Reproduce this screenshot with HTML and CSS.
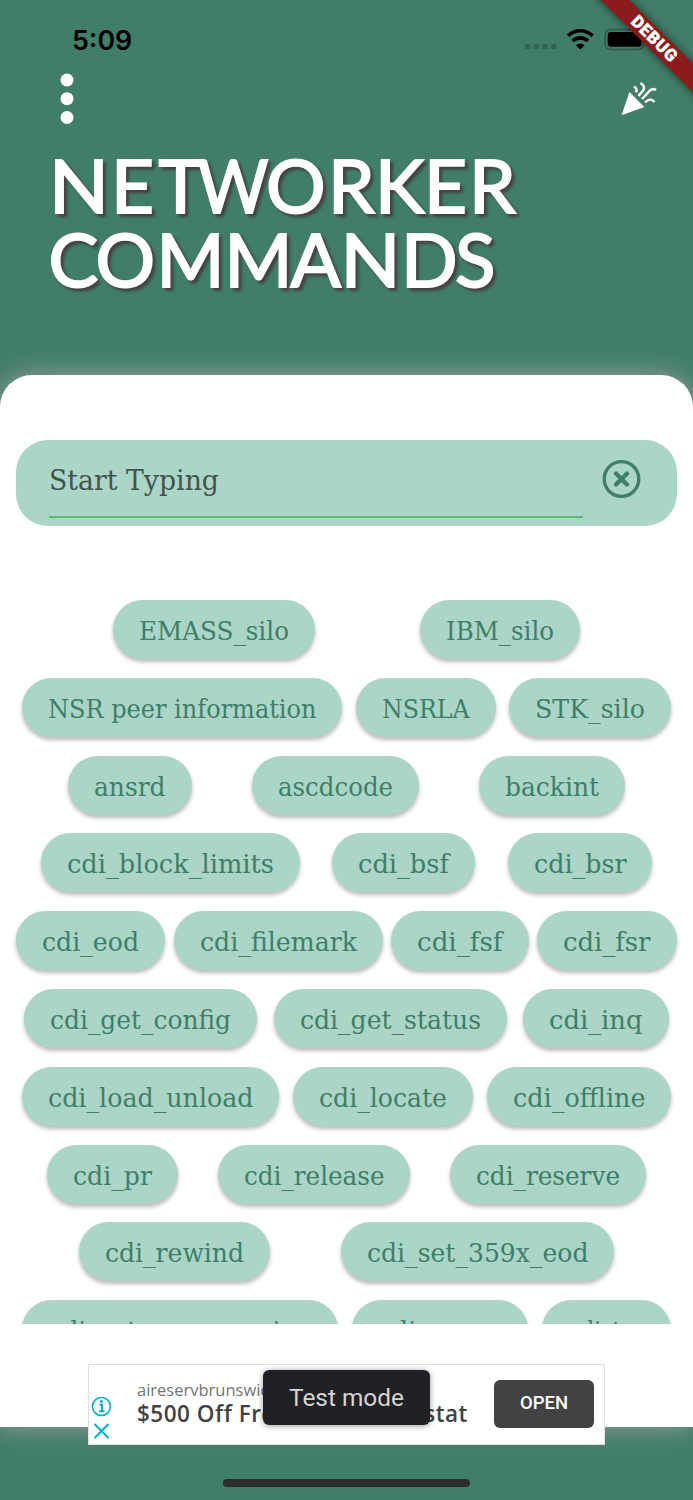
FILE: index.html
```html
<!DOCTYPE html>
<html lang="en">
<head>
  <meta charset="utf-8">
  <title>Networker Commands</title>
  <link rel="stylesheet" href="styles.css">
</head>
<body>
<div class="screen">

  <div class="status">
    <span class="time">5:09</span>
    <svg class="status-icons" width="130" height="30" viewBox="520 24 130 30">
      <g fill="#316352">
        <rect x="525" y="44" width="5.5" height="5" rx="1.5"/>
        <rect x="533.7" y="44" width="5.5" height="5" rx="1.5"/>
        <rect x="542.3" y="44" width="5.5" height="5" rx="1.5"/>
        <rect x="551" y="44" width="5.5" height="5" rx="1.5"/>
      </g>
      <g fill="none" stroke="#000" stroke-width="3.6">
        <path d="M568 35.8a17.5 17.5 0 0 1 24.6 0"/>
        <path d="M572.6 41a11 11 0 0 1 15.4 0"/>
      </g>
      <path d="M576 45.3a6.2 6.2 0 0 1 8.6 0l-4.3 4.3z"/>
      <rect x="605.2" y="29.5" width="38.5" height="20" rx="5.5" fill="none" stroke="#2c5a4a" stroke-width="1.5"/>
      <rect x="607.7" y="32" width="34" height="14.7" rx="3"/>
      <path d="M645.5 36.5q3 3 0 6z" fill="#2c5a4a"/>
    </svg>
  </div>

  <div class="toolbar">
    <svg width="16" height="54" viewBox="0 0 16 54" fill="#fff">
      <circle cx="8" cy="8" r="6.5"/>
      <circle cx="8" cy="26.7" r="6.5"/>
      <circle cx="8" cy="45.5" r="6.5"/>
    </svg>
    <svg width="40" height="40" viewBox="619 78 40 40">
      <path d="M629.4 92l15 15-22.8 8.3z" fill="#fff"/>
      <g fill="none" stroke="#fff" stroke-width="2.5">
        <path d="M634 86.5q4 2.5 1.8 5.8"/>
        <path d="M640.5 83q5.5 3.5 2.5 7.5l-4.5 5.5"/>
        <path d="M642 99l8-8.5q3-2.5 6-.5"/>
        <path d="M645 102.5q5-5.5 9.5-.5"/>
      </g>
    </svg>
  </div>

  <h1 class="title">
    <svg width="600" height="160" viewBox="30 140 600 160">
      <text y="212.5"><tspan x="49" textLength="60" lengthAdjust="spacingAndGlyphs">N</tspan><tspan x="111 158.5">ET</tspan><tspan x="197.5" textLength="71" lengthAdjust="spacingAndGlyphs">W</tspan><tspan x="266 328 375 424 469">ORKER</tspan></text>
      <text y="287"><tspan x="48.5 95.5">CO</tspan><tspan x="156.5" textLength="68" lengthAdjust="spacingAndGlyphs">M</tspan><tspan x="224.5" textLength="68" lengthAdjust="spacingAndGlyphs">M</tspan><tspan x="290.5">A</tspan><tspan x="340.5" textLength="60" lengthAdjust="spacingAndGlyphs">N</tspan><tspan x="401 455">DS</tspan></text>
    </svg>
  </h1>

  <div class="sheet">
    <div class="search">
      <div class="field">
        <svg width="180" height="50"><text x="0" y="35" textLength="170" lengthAdjust="spacingAndGlyphs">Start Typing</text></svg>
      </div>
      <svg width="40" height="40" viewBox="0 0 40 40" fill="none" stroke="#407e69">
        <circle cx="19.5" cy="20" r="17.3" stroke-width="3.3"/>
        <path d="M14 14.5l11 11M25 14.5l-11 11" stroke-width="4.4" stroke-linecap="round"/>
      </svg>
    </div>
    <div class="chips" id="chips"></div>
  </div>

  <div class="ad">
    <svg class="ad-marks" width="22" height="50" viewBox="90 1394 22 50" fill="none" stroke="#00aecd">
      <circle cx="101.4" cy="1406.5" r="9" stroke-width="1.6"/>
      <path d="M99.5 1404.7h2.5v6.5M99 1411.2h5.5" stroke-width="2"/>
      <circle cx="101.4" cy="1401.5" r="1.5" fill="#00aecd" stroke="none"/>
      <path d="M94.5 1424l14 14M108.5 1424l-14 14" stroke-width="2"/>
    </svg>
    <div class="ad-text">
      <div class="ad-site">aireservbrunswick.com</div>
      <div class="ad-offer"><span>$500 Off Free</span><span>stat</span></div>
    </div>
    <div class="ad-open">OPEN</div>
    <div class="toast">Test mode</div>
  </div>

  <div class="home"></div>

  <svg class="debug" width="120" height="120" viewBox="573 0 120 120">
    <path class="band" d="M587-28l134 134" stroke="#8e1b1c" stroke-width="20"/>
    <text transform="translate(654.5 38.5) rotate(45)" y="6" text-anchor="middle" textLength="57">DEBUG</text>
  </svg>
</div>

<script src="chips.js"></script>
</body>
</html>
```
FILE: styles.css
```css
body {
  margin: 0;
  background: #407e69;
}
.screen {
  position: relative;
  width: 693px;
  height: 1500px;
  overflow: hidden;
  background: #407e69;
  font-family: "Open Sans", sans-serif;
}
svg {
  display: block;
}
.status {
  display: flex;
  justify-content: space-between;
  box-sizing: border-box;
  height: 72px;
  padding: 24px 43px 0 72px;
}
.time {
  font: 600 26.8px/32px Inter, sans-serif;
}
.toolbar {
  display: flex;
  justify-content: space-between;
  height: 68px;
  padding: 0 34px 0 59px;
}
.toolbar svg:last-child {
  margin-top: 6px;
}
.title {
  height: 235px;
  margin: 0 0 0 30px;
}
.title svg {
  filter: drop-shadow(3px 3px 1.5px #424242);
}
.title text {
  font: 400 74.5px Lato, sans-serif;
  fill: #fff;
  stroke: #fff;
  stroke-width: 2px;
}
.sheet {
  box-sizing: border-box;
  height: 1052px;
  padding: 65px 16px 0;
  border-radius: 32px 32px 0 0;
  background: #fff;
  box-shadow: 0 0 26px #9e9e9e;
}
.search {
  display: flex;
  justify-content: space-between;
  box-sizing: border-box;
  height: 85.5px;
  padding: 0 35px 0 33px;
  border-radius: 32px;
  background: #aad5c7;
}
.search > svg {
  margin-top: 19px;
}
.field {
  width: 534px;
  height: 76px;
  border-bottom: 2px solid #60b873;
}
.field svg {
  margin-top: 15px;
}
.field text,
.chip text {
  font-family: "Roboto Slab", "DejaVu Serif Condensed", "DejaVu Serif", serif;
}
.field text {
  font-size: 28px;
  fill: #42534e;
}
.chips {
  display: flex;
  flex-wrap: wrap;
  justify-content: space-evenly;
  align-content: flex-start;
  gap: 18.8px 8px;
  height: 724px;
  margin: 74.5px -8px 0;
  padding: 0 8px;
  overflow: hidden;
}
.chip {
  height: 59px;
  border-radius: 30px;
  background: #aad5c7;
  box-shadow: 0 3px 4px rgba(0, 0, 0, .27);
}
.chip text {
  font-size: 26px;
  fill: #407e69;
}
.ad {
  position: absolute;
  left: 88px;
  top: 1364px;
  display: flex;
  box-sizing: border-box;
  width: 517px;
  height: 81px;
  border: 1.5px solid #e0e0e0;
  background: #fff;
}
.ad-marks {
  margin: 29px 0 0 1px;
}
.ad-text {
  width: 357px;
  padding: 14px 0 0 25px;
  box-sizing: border-box;
}
.ad-site {
  font: 16.5px/22px "Open Sans", sans-serif;
  color: #757575;
}
.ad-offer {
  display: flex;
  justify-content: space-between;
  width: 331px;
  font: 600 22.5px/25px "Open Sans", sans-serif;
  letter-spacing: .5px;
  color: #424242;
}
.ad-open {
  width: 100px;
  height: 48px;
  margin: 15px 0 0 25px;
  border-radius: 6px;
  background: #424242;
  color: #fff;
  font: 500 18.5px/46px Roboto, sans-serif;
  text-align: center;
}
.toast {
  position: absolute;
  left: 174px;
  top: 5px;
  width: 167px;
  height: 55px;
  border-radius: 6px;
  background: #202125;
  box-shadow: 0 1px 6px rgba(0, 0, 0, .4);
  color: #d4d4d4;
  font: 24.4px/56px Roboto, sans-serif;
  text-align: center;
}
.home {
  width: 247px;
  height: 8px;
  margin: 52px auto 0;
  border-radius: 4px;
  background: #2d2d2d;
}
.debug {
  position: absolute;
  right: 0;
  top: 0;
}
.band {
  filter: drop-shadow(0 0 5px rgba(0, 0, 0, .6));
}
.debug text {
  font: 900 17px Roboto, sans-serif;
  fill: #fff;
  stroke: #fff;
  stroke-width: .4px;
}
```
FILE: chips.js
```javascript
// label and chip width
var commands = [
  ['EMASS_silo', 202], ['IBM_silo', 160],
  ['NSR peer information', 320.5], ['NSRLA', 139.5], ['STK_silo', 162],
  ['ansrd', 123.5], ['ascdcode', 167], ['backint', 146],
  ['cdi_block_limits', 259], ['cdi_bsf', 143], ['cdi_bsr', 144.5],
  ['cdi_eod', 149], ['cdi_filemark', 209], ['cdi_fsf', 137.5], ['cdi_fsr', 139.5],
  ['cdi_get_config', 233], ['cdi_get_status', 233], ['cdi_inq', 145.5],
  ['cdi_load_unload', 257.5], ['cdi_locate', 180], ['cdi_offline', 184.5],
  ['cdi_pr', 131], ['cdi_release', 192.5], ['cdi_reserve', 196],
  ['cdi_rewind', 191], ['cdi_set_359x_eod', 273.5],
  ['cdi_set_compression', 316], ['cdi_space', 176], ['cdi_tur', 129.5]
];

var html = '';
for (var i = 0; i < commands.length; i++) {
  var width = commands[i][1];
  html += '<div class="chip" style="width:' + width + 'px">' +
      '<svg width="' + width + '" height="59">' +
      '<text x="26" y="40" textLength="' + (width - 52) +
      '" lengthAdjust="spacingAndGlyphs">' + commands[i][0] + '</text></svg></div>';
}
document.getElementById('chips').innerHTML = html;
```
